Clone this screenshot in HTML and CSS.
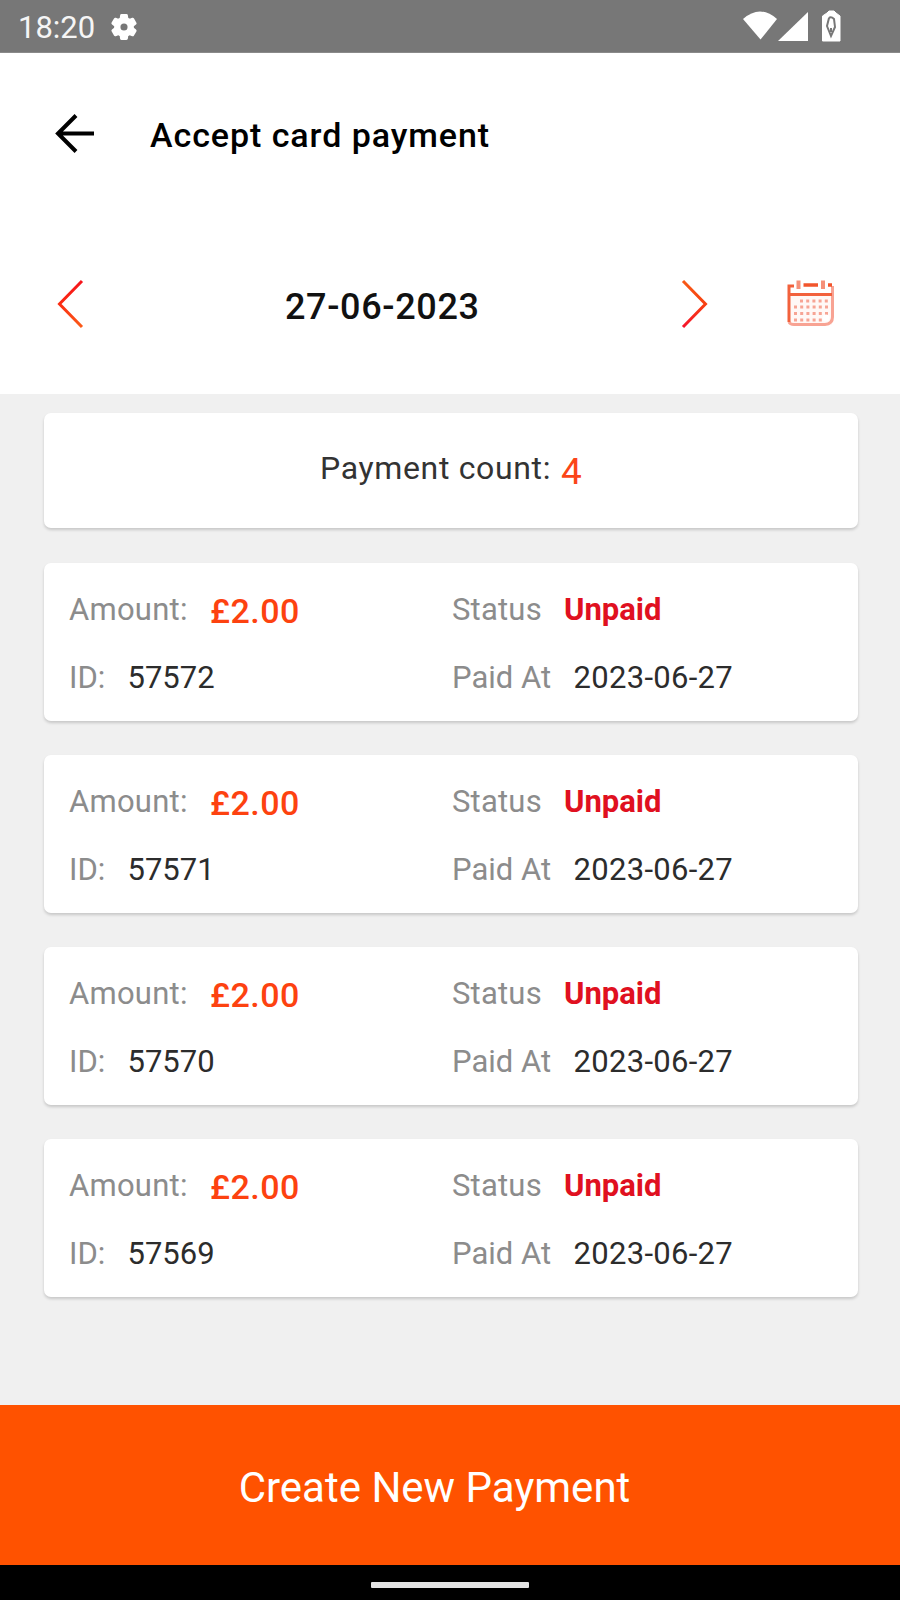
FILE: index.html
```
<!DOCTYPE html>
<html lang="en">
<head>
<meta charset="utf-8">
<title>Accept card payment</title>
<link rel="stylesheet" href="styles.css">
</head>
<body>
<div class="screen">
  <div class="status-bar">
    <span class="clock">18:20</span>
    <svg class="gear" width="30" height="30" viewBox="0 0 24 24"><path fill="#fff" stroke="#fff" stroke-width="1.500" d="M19.14 12.94c.04-.3.06-.61.06-.94 0-.32-.02-.64-.07-.94l2.03-1.58a.49.49 0 0 0 .12-.61l-1.92-3.32a.49.49 0 0 0-.59-.22l-2.39.96c-.5-.38-1.03-.7-1.62-.94l-.36-2.54a.48.48 0 0 0-.48-.41h-3.84a.47.47 0 0 0-.47.41l-.36 2.54c-.59.24-1.13.57-1.62.94l-2.39-.96a.48.48 0 0 0-.59.22L2.74 8.87a.47.47 0 0 0 .12.61l2.03 1.58c-.05.3-.09.63-.09.94s.02.64.07.94l-2.03 1.58a.49.49 0 0 0-.12.61l1.92 3.32c.12.22.37.29.59.22l2.39-.96c.5.38 1.03.7 1.62.94l.36 2.54c.05.24.24.41.48.41h3.84c.24 0 .44-.17.47-.41l.36-2.54c.59-.24 1.13-.56 1.62-.94l2.39.96c.22.08.47 0 .59-.22l1.92-3.32a.47.47 0 0 0-.12-.61zM12 15.6a3.6 3.6 0 1 1 0-7.2 3.6 3.6 0 0 1 0 7.2z"/></svg>
    <svg class="signals" width="100" height="34" viewBox="0 0 100 34">
      <path fill="#fff" d="M0 9Q17-6 34 9L17.500 29.500Z"/>
      <path fill="#fff" d="M65 2V31H35Z"/>
      <path fill="#fff" stroke="#fff" stroke-linejoin="round" d="M79.500 6L84 3L86 1H91L93 3L97 6V31H79.500Z"/>
      <path fill="none" stroke="#777" stroke-width="2" d="M86 8L84 16L88 26L92 17L91 9Q88 6 86 8M88 18V22"/>
    </svg>
  </div>
  <header class="app-bar">
    <svg class="back" width="42" height="42" viewBox="0 0 42 42"><path fill="none" stroke="#000" stroke-width="4" d="M23 2.500L5 20.500L23 38.500M5 20.500H41"/></svg>
    <h1 class="title">Accept card payment</h1>
  </header>
  <div class="date-bar">
    <svg class="prev" width="28" height="50" viewBox="0 0 28 50">
      <defs><linearGradient id="red-top" x1="0" y1="0" x2="0" y2="1"><stop offset="0" stop-color="#f5141c"/><stop offset=".45" stop-color="#fb2812"/><stop offset="1" stop-color="#fb5c18"/></linearGradient></defs>
      <path fill="none" stroke="url(#red-top)" stroke-width="3" d="M26 2L3.500 25L26 48"/></svg>
    <span class="date">27-06-2023</span>
    <svg class="next" width="28" height="50" viewBox="0 0 28 50">
      <defs><linearGradient id="red-end" x1="0" y1="0" x2="0" y2="1"><stop offset="0" stop-color="#f75a16"/><stop offset=".5" stop-color="#f84010"/><stop offset="1" stop-color="#f5142c"/></linearGradient></defs>
      <path fill="none" stroke="url(#red-end)" stroke-width="3" d="M2 2L24.500 25L2 48"/></svg>
    <svg class="calendar" width="50" height="50" viewBox="0 0 50 50">
      <rect x="3" y="15" width="43" height="32" fill="#fff8f6"/>
      <path fill="none" stroke="#f8a393" stroke-width="3" d="M3 44Q4 46.500 8 46.500H39Q46.500 46 46.500 39V8"/>
      <path fill="none" stroke="#f2613c" stroke-width="3" d="M8 8H3V44M3 16.500H46"/>
      <path stroke="#f2552c" stroke-width="3.500" d="M17.500 7H32M42 7H46"/>
      <path stroke="#f5917a" stroke-width="4" d="M12.500 2.500V11M37 2.500V11"/>
      <path fill="none" stroke="#f7a494" stroke-width="3" stroke-dasharray="3 3.200" d="M14 23H44M8 29H44M8 35.500H44M8 42H36"/>
      <circle cx="40" cy="40" r="3.500" fill="#fff"/>
    </svg>
  </div>
  <main class="content">
    <section class="card count"><span class="count-label">Payment count:</span><span class="count-value">4</span></section>
    <section class="card payment">
      <div class="cell"><span class="label amount-label">Amount:</span><span class="amount">£2.00</span></div>
      <div class="cell"><span class="label status-label">Status</span><span class="status">Unpaid</span></div>
      <div class="cell"><span class="label id-label">ID:</span><span class="value">57572</span></div>
      <div class="cell"><span class="label paid-label">Paid At</span><span class="value paid">2023-06-27</span></div>
    </section>
    <section class="card payment">
      <div class="cell"><span class="label amount-label">Amount:</span><span class="amount">£2.00</span></div>
      <div class="cell"><span class="label status-label">Status</span><span class="status">Unpaid</span></div>
      <div class="cell"><span class="label id-label">ID:</span><span class="value">57571</span></div>
      <div class="cell"><span class="label paid-label">Paid At</span><span class="value paid">2023-06-27</span></div>
    </section>
    <section class="card payment">
      <div class="cell"><span class="label amount-label">Amount:</span><span class="amount">£2.00</span></div>
      <div class="cell"><span class="label status-label">Status</span><span class="status">Unpaid</span></div>
      <div class="cell"><span class="label id-label">ID:</span><span class="value">57570</span></div>
      <div class="cell"><span class="label paid-label">Paid At</span><span class="value paid">2023-06-27</span></div>
    </section>
    <section class="card payment">
      <div class="cell"><span class="label amount-label">Amount:</span><span class="amount">£2.00</span></div>
      <div class="cell"><span class="label status-label">Status</span><span class="status">Unpaid</span></div>
      <div class="cell"><span class="label id-label">ID:</span><span class="value">57569</span></div>
      <div class="cell"><span class="label paid-label">Paid At</span><span class="value paid">2023-06-27</span></div>
    </section>
  </main>
  <button class="create" type="button">Create New Payment</button>
  <div class="nav-bar"><span class="pill"></span></div>
</div>
</body>
</html>
```
FILE: styles.css
```
* { box-sizing: border-box; }
body { margin: 0; background: #f0f0f0; font-family: Roboto, "Noto Sans", sans-serif; color: #000; }
.screen { display: flex; flex-direction: column; width: 900px; height: 1600px; }
.screen span, .title { white-space: nowrap; }

.status-bar { display: flex; align-items: flex-start; height: 53px; padding-left: 18px; background: #777; border-bottom: 1px solid #8a8a8a; }
.clock { width: 91px; padding-top: 10px; font-size: 31px; line-height: 36px; color: #f5f5f5; }
.gear { margin-top: 12px; }
.signals { margin: 10px 0 0 604px; }

.app-bar { display: flex; height: 151px; padding-left: 53px; background: #fff; }
.back { margin-top: 60px; }
.title { margin: 62px 0 0 55px; font-size: 34px; line-height: 40px; font-weight: 500; letter-spacing: .93px; }

.date-bar { display: flex; height: 190px; padding-left: 56px; background: #fff; }
.prev { margin-top: 75px; }
.date { width: 597px; padding: 82px 0 0 201px; font-size: 36px; line-height: 42px; font-weight: 500; letter-spacing: .65px; color: #111; }
.next { margin-top: 75px; }
.calendar { margin: 74px 0 0 77px; }

.content { display: flex; flex: 1; flex-direction: column; padding: 19px 42px 0 44px; }
.card { background: #fff; border-radius: 7px; box-shadow: 0 2px 3px rgba(0, 0, 0, .17); }
.count { display: flex; height: 115px; margin-bottom: 34.500px; padding-left: 276px; }
.count-label { width: 241px; padding-top: 36px; font-size: 32px; line-height: 38px; letter-spacing: .65px; color: #333; }
.count-value { padding-top: 37px; font-size: 37px; line-height: 43px; color: #fb4518; }

.payment { display: grid; grid-template-columns: 383px 1fr; grid-template-rows: 68px 60px; height: 158px; margin-bottom: 34.200px; padding: 29px 0 0 25px; }
.cell { display: flex; align-items: flex-start; }
.label { font-size: 31px; line-height: 36px; color: #8c8c8c; }
.amount-label { width: 141px; letter-spacing: .25px; }
.status-label { width: 112px; letter-spacing: .2px; }
.id-label { width: 58.500px; }
.paid-label { width: 121.500px; }
.amount { font-size: 34px; line-height: 38px; font-weight: 500; letter-spacing: .5px; color: #fd4210; }
.status { font-size: 31px; line-height: 36px; font-weight: 700; color: #e01020; }
.value { font-size: 31px; line-height: 36px; color: #2c2c2c; }
.paid { letter-spacing: .3px; }

.create { flex: none; height: 160px; margin: 0; padding: 4px 31px 0 0; border: 0; background: #ff5200; font-family: inherit; font-size: 42px; font-weight: 400; color: #fff; }
.nav-bar { display: flex; flex: none; justify-content: center; height: 35px; padding-top: 17px; background: #000; }
.pill { width: 158px; height: 6px; border-radius: 1px; background: #e4e4e4; }
```
